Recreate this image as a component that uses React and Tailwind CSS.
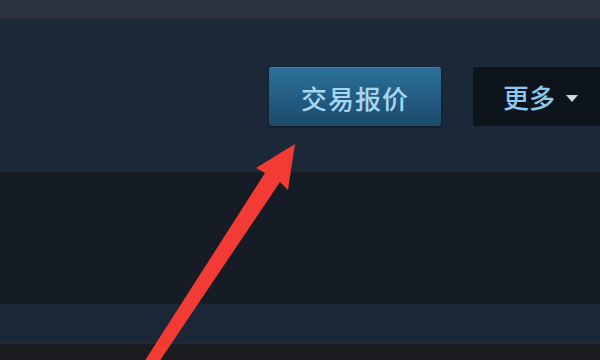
export default function App() {
  return (
    <div
      className="relative w-[600px] h-[360px] overflow-hidden flex flex-col bg-[#1b2838]"
      style={{ fontFamily: '"Noto Sans CJK SC", "Noto Sans", sans-serif' }}
    >
      {/* top strip */}
      <div className="h-[18px] bg-[#2d3240] flex-shrink-0" />
      <div className="h-[3px] bg-gradient-to-b from-[#262e3c] to-[#1b2838] flex-shrink-0" />

      {/* action row */}
      <div className="h-[151px] flex-shrink-0 bg-[#1b2838] flex items-start pt-[46px] pl-[269px] gap-[32px]">
        <button className="flex-shrink-0 w-[172px] h-[59px] rounded-[3px] bg-gradient-to-b from-[#2b7099] to-[#1c4a6b] border-t border-[#3a84ad] text-[#a6d6f2] text-[26px] font-medium tracking-[1px] flex items-center justify-center shadow-[0_1px_2px_rgba(0,0,0,0.5)]">
          交易报价
        </button>
        <button className="flex-shrink-0 w-[140px] h-[59px] rounded-[2px] bg-[#0e141c] flex items-center pl-[30px] gap-[11px] text-[#8cc9ef] text-[26px] font-medium">
          <span>更多</span>
          <svg width="12" height="8" viewBox="0 0 12 8" className="mt-[2px]">
            <polygon points="0,1 12,1 6,8" fill="#cfd6dd" />
          </svg>
        </button>
      </div>

      {/* dark band */}
      <div className="h-[132px] flex-shrink-0 bg-[#151c26]" />
      {/* mid band */}
      <div className="h-[40px] flex-shrink-0 bg-[#1b2737] border-b border-[#252c36]" />
      {/* bottom */}
      <div className="flex-1 bg-[#1b1c1f]" />

      {/* red annotation arrow */}
      <svg className="absolute left-0 top-0" width="600" height="360" viewBox="0 0 600 360">
        <polygon
          points="295,144 288,190 280,182 159,362 144,362 265,173 256,168"
          fill="#f23b34"
        />
      </svg>
    </div>
  )
}
